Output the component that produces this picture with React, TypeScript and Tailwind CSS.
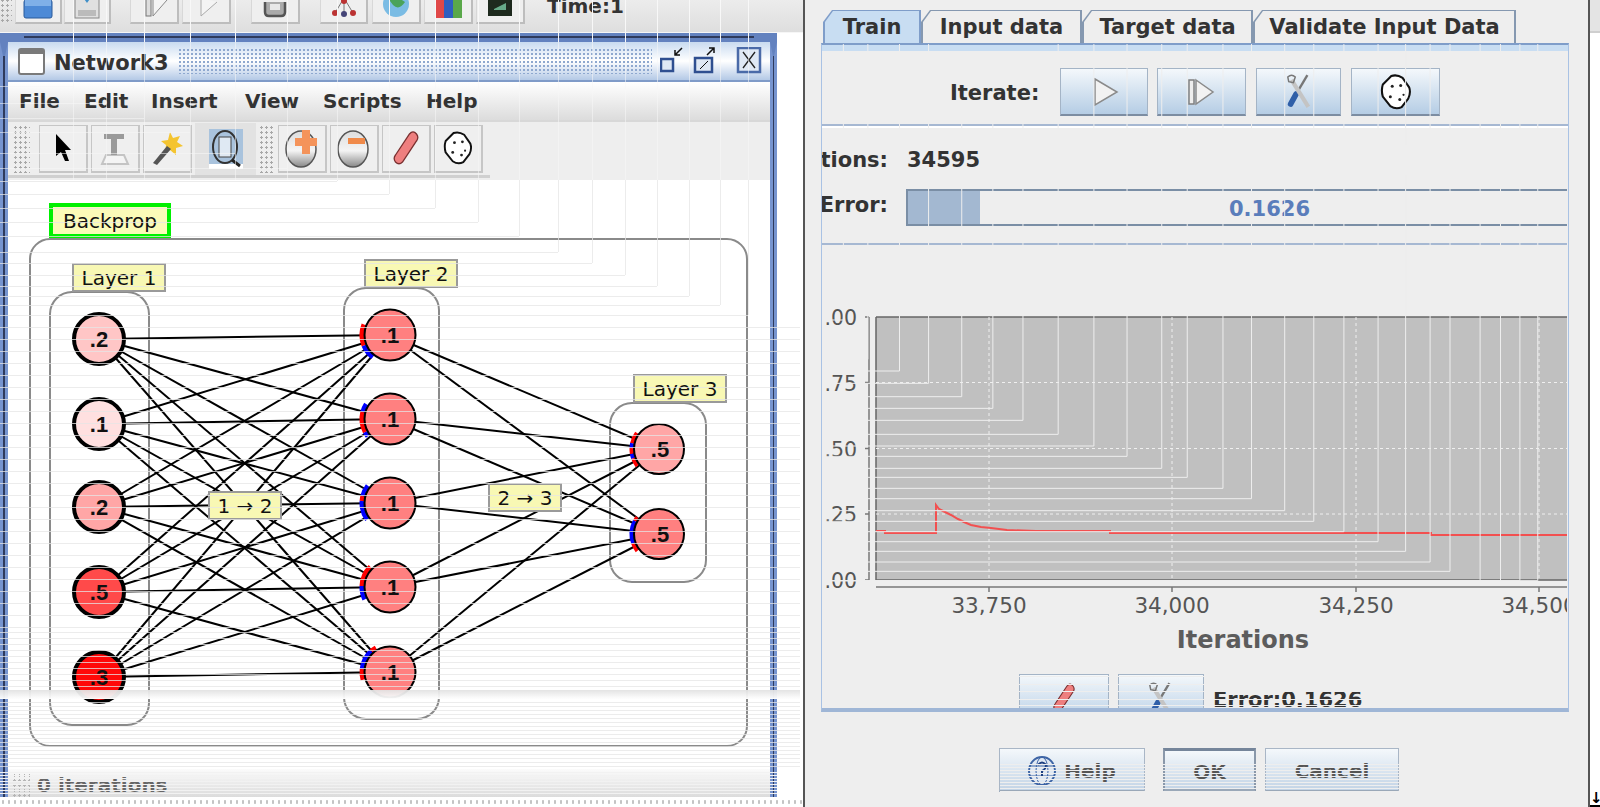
import React from "react";

const L1 = [339, 424, 507, 592, 677].map((y) => ({ x: 99, y }));
const L2 = [335, 419, 503, 587, 672].map((y) => ({ x: 390, y }));
const L3 = [449, 534].map((y) => ({ x: 659, y }));
const L1Fill = ["#ffc6c6", "#ffe0e0", "#ffa6a6", "#ff4a4a", "#ff0808"];
const L1Text = [".2", ".1", ".2", ".5", ".3"];
const L3Fill = ["#ffa6a6", "#ff8080"];

type Seg = [string, number, number];
const L2Arcs: Seg[][] = [
  [["#f00", -22, 22], ["#00f", 22, 52]],
  [["#00f", -32, -14], ["#f00", -14, 28], ["#00f", 28, 38]],
  [["#00f", -38, -14], ["#f00", -14, -4], ["#00f", -4, 36]],
  [["#f00", -46, -2], ["#00f", -2, 26]],
  [["#f00", -60, -48], ["#00f", -48, -6], ["#f00", -6, 16]],
];
const L3Arcs: Seg[][] = [
  [["#f00", -36, -12], ["#00f", -12, -2], ["#f00", -2, 10], ["#00f", 10, 20], ["#f00", 20, 38]],
  [["#f00", -38, -28], ["#00f", -28, 20], ["#f00", 20, 38]],
];

function arc(cx: number, cy: number, r: number, a: number, b: number) {
  const p = (d: number) => {
    const t = (d * Math.PI) / 180;
    return `${(cx - r * Math.cos(t)).toFixed(1)} ${(cy + r * Math.sin(t)).toFixed(1)}`;
  };
  return `M${p(a)} A${r} ${r} 0 0 0 ${p(b)}`;
}

function Label({ x, y, w, h, text, green }: { x: number; y: number; w: number; h: number; text: string; green?: boolean }) {
  return (
    <g>
      {green ? (
        <rect x={x + 2} y={y + 2} width={w - 4} height={h - 4} fill="#fbfbb8" stroke="#00f000" strokeWidth="4" />
      ) : (
        <rect x={x + 1} y={y + 1} width={w - 2} height={h - 2} fill="#f8f8b4" stroke="#9a9a9a" strokeWidth="2" />
      )}
      <text x={x + w / 2} y={y + h / 2 + 7} textAnchor="middle" fontSize="20" fill="#111" fontFamily="DejaVu Sans">
        {text}
      </text>
    </g>
  );
}

function Diagram() {
  return (
    <svg className="block w-[762px] h-[589px] shrink-0" viewBox="8 180 762 589">
      <rect x="8" y="180" width="762" height="589" fill="#fff" />
      <g fill="none" stroke="#8a8a8a" strokeWidth="2">
        <rect x="30" y="239" width="717" height="507" rx="20" />
        <rect x="50" y="292" width="99" height="433" rx="22" />
        <rect x="344" y="288" width="95" height="431" rx="22" />
        <rect x="610" y="403" width="96" height="179" rx="22" />
      </g>
      <g stroke="#000" strokeWidth="2">
        {L1.flatMap((a, i) => L2.map((b, j) => <line key={`a${i}${j}`} x1={a.x} y1={a.y} x2={b.x} y2={b.y} />))}
        {L2.flatMap((a, i) => L3.map((b, j) => <line key={`b${i}${j}`} x1={a.x} y1={a.y} x2={b.x} y2={b.y} />))}
      </g>
      {L2.map((n, i) =>
        L2Arcs[i].map((s, k) => <path key={`${i}-${k}`} d={arc(n.x, n.y, 28, s[1], s[2])} fill="none" stroke={s[0]} strokeWidth="5" />)
      )}
      {L3.map((n, i) =>
        L3Arcs[i].map((s, k) => <path key={`${i}-${k}`} d={arc(n.x, n.y, 27, s[1], s[2])} fill="none" stroke={s[0]} strokeWidth="5" />)
      )}
      {L1.map((n, i) => (
        <g key={i}>
          <circle cx={n.x} cy={n.y} r="25" fill={L1Fill[i]} stroke="#000" strokeWidth="4" />
          <text x={n.x} y={n.y + 8} textAnchor="middle" fontSize="22" fontWeight="700" fontFamily="Liberation Sans" fill="#111">
            {L1Text[i]}
          </text>
        </g>
      ))}
      {L2.map((n, i) => (
        <g key={i}>
          <circle cx={n.x} cy={n.y} r="25.5" fill="#ff8080" stroke="#000" strokeWidth="2" />
          <text x={n.x} y={n.y + 8} textAnchor="middle" fontSize="22" fontWeight="700" fontFamily="Liberation Sans" fill="#111">
            .1
          </text>
        </g>
      ))}
      {L3.map((n, i) => (
        <g key={i}>
          <circle cx={n.x} cy={n.y} r="25" fill={L3Fill[i]} stroke="#000" strokeWidth="2" />
          <text x={n.x + 1} y={n.y + 8} textAnchor="middle" fontSize="22" fontWeight="700" fontFamily="Liberation Sans" fill="#111">
            .5
          </text>
        </g>
      ))}
      <Label x={49} y={203} w={122} h={35} text="Backprop" green />
      <Label x={72} y={263} w={94} h={29} text="Layer 1" />
      <Label x={364} y={259} w={94} h={29} text="Layer 2" />
      <Label x={633} y={374} w={94} h={29} text="Layer 3" />
      <Label x={208} y={491} w={74} h={29} text="1 → 2" />
      <Label x={488} y={483} w={74} h={29} text="2 → 3" />
    </svg>
  );
}

/* ---------- icons ---------- */
function Cursor() {
  return (
    <svg width="20" height="30" viewBox="0 0 20 30">
      <path d="M3 1 L18 17 L12 17 L16 28 L12 28 L8 19 L3 23 Z" fill="#000" />
    </svg>
  );
}
function TextTool() {
  return (
    <svg width="34" height="34" viewBox="0 0 34 34">
      <path d="M8 24 L26 24 L30 33 L4 33 Z" fill="#f4f4f4" stroke="#c4c4c4" strokeWidth="2" />
      <path d="M6 3 H26 V8 H19 V24 H13 V8 H6 Z" fill="#9a9a9a" />
    </svg>
  );
}
function Wand() {
  return (
    <svg width="34" height="36" viewBox="0 0 34 36">
      <path d="M20 2 L23 8 L30 6 L27 12 L33 16 L26 18 L26 25 L20 20 L15 23 L16 15 L11 11 L18 10 Z" fill="#f4c430" />
      <path d="M3 33 L17 16 L21 19 L7 35 Z" fill="#555" />
    </svg>
  );
}
function ZoomIcon() {
  return (
    <svg width="36" height="42" viewBox="0 0 36 42">
      <rect x="1" y="1" width="34" height="40" fill="#a9c3dd" />
      <rect x="1" y="36" width="34" height="5" fill="#fff" />
      <ellipse cx="17" cy="19" rx="12" ry="16" fill="none" stroke="#333" strokeWidth="2" />
      <rect x="11" y="9" width="12" height="20" fill="#dfe9f3" stroke="#444" />
      <path d="M24 32 L32 38" stroke="#222" strokeWidth="3" />
    </svg>
  );
}
function NodeIcon({ minus }: { minus?: boolean }) {
  const id = minus ? "gm" : "gp";
  return (
    <svg width="34" height="40" viewBox="0 0 34 40">
      <defs>
        <linearGradient id={id} x1="0" y1="0" x2="0" y2="1">
          <stop offset="0" stopColor="#ddd" />
          <stop offset="0.55" stopColor="#f4f4f4" />
          <stop offset="1" stopColor="#888" />
        </linearGradient>
      </defs>
      <ellipse cx="16" cy="21" rx="15" ry="18" fill={`url(#${id})`} stroke="#555" strokeWidth="1.5" />
      {minus ? (
        <rect x="11" y="10" width="17" height="6" fill="#f08a4a" />
      ) : (
        <path d="M17 2 H25 V10 H32 V18 H25 V26 H17 V18 H10 V10 H17 Z" fill="#f4935a" />
      )}
    </svg>
  );
}
function Eraser() {
  return (
    <svg width="28" height="40" viewBox="0 0 32 40">
      <path d="M4 28 L20 4 Q24 -1 28 4 Q31 8 28 12 L12 36 Q8 40 4 36 Q1 32 4 28 Z" fill="#ee7f7f" stroke="#7a3030" strokeWidth="1.5" />
    </svg>
  );
}
function Dice({ w = 30 }: { w?: number }) {
  return (
    <svg width={w} height="38" viewBox="0 0 34 38">
      <path d="M12 2 Q18 0 24 4 L31 14 Q33 20 30 26 L23 35 Q17 38 11 34 L3 24 Q1 17 3 11 Z" fill="#fff" stroke="#111" strokeWidth="2.2" strokeLinejoin="round" />
      <g fill="#222">
        <circle cx="13" cy="13" r="1.6" />
        <circle cx="22" cy="12" r="1.6" />
        <circle cx="11" cy="24" r="1.6" />
        <circle cx="21" cy="27" r="1.6" />
        <circle cx="25" cy="22" r="1.2" />
      </g>
    </svg>
  );
}
function Play({ bar }: { bar?: boolean }) {
  return (
    <svg width="34" height="30" viewBox="0 0 34 30">
      {bar && <rect x="4" y="3" width="5" height="24" fill="#eee" stroke="#808080" strokeWidth="1.5" />}
      <path d={bar ? "M11 3 L28 15 L11 27 Z" : "M8 2 L30 15 L8 28 Z"} fill="#f2f2f2" stroke="#8a8a8a" strokeWidth="1.5" />
    </svg>
  );
}
function Tools() {
  return (
    <svg width="28" height="38" viewBox="0 0 30 40">
      <path d="M24 2 L12 22" stroke="#777" strokeWidth="2.5" />
      <path d="M12 22 L6 33" stroke="#2f5fa8" strokeWidth="6" strokeLinecap="round" />
      <path d="M7 7 L25 36" stroke="#c4c4c4" strokeWidth="4.5" />
      <path d="M3 4 Q7 0 11 4 L9 10 L4 9 Z" fill="none" stroke="#777" strokeWidth="1.6" />
    </svg>
  );
}
function HelpIcon() {
  return (
    <svg width="28" height="30" viewBox="0 0 28 30">
      <ellipse cx="14" cy="15" rx="13" ry="14" fill="#dfe8f3" stroke="#3d64a5" strokeWidth="2" />
      <ellipse cx="14" cy="15" rx="6" ry="14" fill="none" stroke="#3d64a5" />
      <path d="M2 10 H26 M2 20 H26" stroke="#3d64a5" />
      <path d="M10 9 Q14 4 18 9 Q18 13 14 15 V20" fill="none" stroke="#1d3f80" strokeWidth="2" />
    </svg>
  );
}

function TopBtn({ children, w = "w-[48px]" }: { children?: React.ReactNode; w?: string }) {
  return (
    <div className={`${w} h-[46px] shrink-0 bg-[#efefef] border-r-2 border-b-2 border-l border-[#bdbdbd] border-l-[#d8d8d8] flex items-end justify-center pb-[2px] overflow-hidden`}>
      {children}
    </div>
  );
}
function ToolBtn({ children }: { children?: React.ReactNode }) {
  return (
    <div className="w-[49px] h-[48px] shrink-0 bg-[#efefef] border border-[#c6c6c6] border-b-2 border-r-2 flex items-center justify-center">
      {children}
    </div>
  );
}
function Grip({ w }: { w: string }) {
  return <div className={`${w} h-[48px] shrink-0 bg-[radial-gradient(#a8a8a8_1px,transparent_1.2px)] bg-[length:5px_5px]`} />;
}
function IterBtn({ children, w }: { children: React.ReactNode; w: string }) {
  return (
    <div className={`${w} h-[48px] shrink-0 bg-linear-to-b from-[#f4f8fb] to-[#b5cde5] border border-[#a4b4c6] border-b-2 border-b-[#7c8da2] flex items-center justify-center`}>
      {children}
    </div>
  );
}
function Tab({ w, label, active }: { w: string; label: string; active?: boolean }) {
  return (
    <div
      className={`${w} h-[33px] shrink-0 [clip-path:polygon(9px_0,100%_0,100%_100%,0_100%,0_12px)] flex items-center justify-center font-bold text-[21px] text-[#333] ${
        active ? "bg-[#7f9dc9]" : "bg-[#8598b0]"
      }`}
    >
      <div
        className={`w-full h-full mt-[2px] ml-[2px] mr-[2px] pt-[1px] [clip-path:polygon(8px_0,100%_0,100%_100%,0_100%,0_11px)] flex items-center justify-center whitespace-nowrap ${
          active ? "bg-[#c8ddf2]" : "bg-[#eeeeee]"
        }`}
      >
        {label}
      </div>
    </div>
  );
}
function DlgBtn({ w, children, strong }: { w: string; children: React.ReactNode; strong?: boolean }) {
  return (
    <div
      className={`${w} h-[44px] shrink-0 pt-[3px] bg-linear-to-b from-[#f4f8fb] to-[#c3d4e6] border border-[#a9b6c6] flex items-center justify-center gap-[8px] font-bold text-[20px] text-[#555] border-b-2 border-b-[#9aa8b8] ${
        strong ? "border-t-[3px] border-t-[#75859a] border-x-2 border-x-[#8a98aa] border-b-[3px] border-b-[#8a98aa]" : ""
      }`}
    >
      {children}
    </div>
  );
}

/* ---------- chart ---------- */
const chartStairs: [number, number][] = [
  [85, 60], [133, 178], [195, 213], [252, 250], [317, 290], [378, 325], [437, 361], [506, 403], [576, 438], [641, 469],
  [709, 505], [759, 532], [829, 565], [885, 596], [950, 632], [1007, 664], [1066, 695], [1133, 725], [1187, 754],
  [1235, 786], [1274, 814], [1333, 842], [1373, 842], [1411, 842], [1446, 842],
];
const stairs = chartStairs.map(([X, Y]) => [800 + X / 1.96, 300 + Y / 3]);

function Chart() {
  const xs = [988, 1171, 1355, 1538];
  const ys = [382.5, 448.5, 514];
  const tickY = [317, 382.5, 448.5, 514, 580];
  const yl = ["1.00", "0.75", "0.50", "0.25", "0.00"];
  const xl = ["33,750", "34,000", "34,250", "34,500"];
  const red =
    "M875 531 H884 V533 H935 V505 L938 509 L944 512 L950 515 L957 519 L963 522 L970 525 L980 527 L990 528 L1006 530 L1035 531 H1109 V533 H1430 V535 H1566";
  return (
    <svg className="block ml-[3px] w-[742px] h-[420px] shrink-0" viewBox="824 245 742 420">
      <rect x="875" y="317" width="691" height="263" fill="#c0c0c0" />
      <path d="M875 317 H1566" stroke="#666" strokeWidth="1.5" />
      <path d="M875 317 V580 H1566" fill="none" stroke="#666" strokeWidth="1.5" />
      <g stroke="#efefef" strokeDasharray="3 3">
        {xs.map((x) => (
          <line key={x} x1={x} y1="317" x2={x} y2="580" />
        ))}
        {ys.map((y) => (
          <line key={y} x1="875" y1={y} x2="1566" y2={y} />
        ))}
      </g>
      <path d="M868 317 V580" stroke="#777" strokeWidth="1.5" />
      {tickY.map((y, i) => (
        <g key={y}>
          <line x1="864" y1={y} x2="868" y2={y} stroke="#777" strokeWidth="1.5" />
          <text x="856" y={y + 8} textAnchor="end" fontSize="20.5" fill="#555" fontFamily="DejaVu Sans">
            {yl[i]}
          </text>
        </g>
      ))}
      <path d="M875 587 H1566" stroke="#777" strokeWidth="1.5" />
      {xs.map((x, i) => (
        <g key={x}>
          <line x1={x} y1="587" x2={x} y2="592" stroke="#777" strokeWidth="1.5" />
          <text x={x} y="613" textAnchor="middle" fontSize="21.5" fill="#555" fontFamily="DejaVu Sans">
            {xl[i]}
          </text>
        </g>
      ))}
      <path d={red} fill="none" stroke="#f25050" strokeWidth="2" />
      <text x="1242" y="648" textAnchor="middle" fontSize="24" fontWeight="700" fill="#5c5c5c" fontFamily="DejaVu Sans">
        Iterations
      </text>
    </svg>
  );
}

/* ---------- screen artefacts ---------- */
function LeftTrails() {
  const X = [73, 106, 144, 190, 235, 287, 337, 389, 435, 478, 519, 558, 592, 625, 657, 689, 720, 748];
  const Y = [86, 103, 118, 132, 153, 168, 181, 194, 208, 222, 236, 252, 263, 275, 286, 296, 305, 315];
  const rows: number[] = [];
  for (let y = 327; y < 630; y += 12) rows.push(y);
  for (let y = 632; y < 690; y += 6) rows.push(y);
  for (let y = 698; y < 769; y += 4) rows.push(y);
  const status: number[] = [];
  for (let y = 772; y < 796; y += 3) status.push(y);
  return (
    <svg className="absolute left-0 top-0 w-[803px] h-[807px] pointer-events-none" viewBox="0 0 803 807">
      {X.map((x, i) => (
        <g key={x}>
          <line x1={x + 0.5} y1="0" x2={x + 0.5} y2="42" stroke="#f8f8f8" />
          <line x1={x + 0.5} y1="42" x2={x + 0.5} y2="180" stroke="#f8f8f8" opacity="0.55" />
          {Y[i] > 180 && <line x1={x + 0.5} y1="180" x2={x + 0.5} y2={Y[i]} stroke="#e6e6e6" opacity="0.75" />}
          <line x1="0" y1={Y[i] + 0.5} x2={x} y2={Y[i] + 0.5} stroke={Y[i] < 180 ? "#f8f8f8" : "#e6e6e6"} opacity={Y[i] < 180 ? 0.55 : 0.75} />
        </g>
      ))}
      {rows.map((y) => (
        <line key={y} x1="0" y1={y + 0.5} x2="800" y2={y + 0.5} stroke="#e6e6e6" opacity="0.75" />
      ))}
      {status.map((y) => (
        <line key={y} x1="0" y1={y + 0.5} x2="777" y2={y + 0.5} stroke="#f2f2f2" />
      ))}
      <defs>
        <linearGradient id="band" x1="0" y1="0" x2="0" y2="1">
          <stop offset="0" stopColor="#e2e2e2" />
          <stop offset="1" stopColor="#ffffff" />
        </linearGradient>
      </defs>
      <rect x="0" y="690" width="800" height="9" fill="url(#band)" opacity="0.95" />
    </svg>
  );
}
function RightTrails() {
  const stripes: number[] = [];
  for (let y = 764; y < 792; y += 3) stripes.push(y);
  return (
    <svg className="absolute left-[803px] top-0 w-[797px] h-[807px] pointer-events-none" viewBox="803 0 797 807">
      {stairs.map(([x, y]) => {
        const label = x < 900;
        const iterate = x > 945 && x < 1045;
        return (
          <g key={x} stroke="#eeeeee">
            {!iterate && <line x1={x} y1="44" x2={x} y2="145" />}
            {iterate && <line x1={x} y1="118" x2={x} y2="145" />}
            <line x1={x} y1={label ? 226 : 175} x2={x} y2={y} />
            <line x1="822" y1={y} x2={x} y2={y} />
          </g>
        );
      })}
      {[676, 684, 691, 699, 705].map((y) => (
        <line key={y} x1="1000" y1={y + 0.5} x2="1400" y2={y + 0.5} stroke="#eeeeee" />
      ))}
      {stripes.map((y) => (
        <line key={y} x1="1000" y1={y + 0.5} x2="1400" y2={y + 0.5} stroke="#eeeeee" />
      ))}
    </svg>
  );
}

function SideBorder({ w }: { w: string }) {
  return <div className={`${w} shrink-0 bg-[#2e3a5c] border-x-[3px] border-[#7694cf] border-t-[14px] border-t-[#6382bf]`} />;
}

export default function App() {
  return (
    <div className="relative w-[1600px] h-[807px] overflow-hidden flex bg-white font-['DejaVu_Sans',sans-serif]">
      {/* left column */}
      <div className="w-[803px] shrink-0 flex flex-col">
        <div className="h-[33px] shrink-0 bg-linear-to-b from-[#ececec] to-[#dedede] border-b border-[#f6f6f6] flex items-end overflow-hidden pb-[8px]">
          <div className="w-[12px] h-[46px] shrink-0 bg-[radial-gradient(#a8a8a8_1px,transparent_1.2px)] bg-[length:5px_5px]" />
          <div className="w-[3px]" />
          <TopBtn w="w-[47px]">
            <svg width="30" height="20" viewBox="0 0 30 20">
              <rect x="1" y="0" width="28" height="18" rx="2" fill="#4d8ad6" stroke="#2a5a9a" />
              <rect x="2" y="0" width="26" height="6" fill="#7fb0e8" />
            </svg>
          </TopBtn>
          <div className="w-[2px]" />
          <TopBtn w="w-[47px]">
            <svg width="28" height="24" viewBox="0 0 28 24">
              <rect x="2" y="0" width="24" height="22" fill="#e0e0e0" stroke="#888" />
              <path d="M9 0 L14 7 L19 0 Z" fill="#3f8fc8" />
              <rect x="5" y="14" width="18" height="6" fill="#bbb" />
            </svg>
          </TopBtn>
          <div className="w-[19px]" />
          <TopBtn w="w-[49px]">
            <svg width="30" height="22" viewBox="0 0 30 22">
              <rect x="7" y="0" width="5" height="18" fill="#ddd" stroke="#777" />
              <path d="M14 2 V18 L28 2" fill="#f4f4f4" stroke="#888" />
            </svg>
          </TopBtn>
          <div className="w-[3px]" />
          <TopBtn w="w-[49px]">
            <svg width="30" height="22" viewBox="0 0 30 22">
              <path d="M10 0 V18 L26 4" fill="#f4f4f4" stroke="#aaa" />
            </svg>
          </TopBtn>
          <div className="w-[20px]" />
          <TopBtn w="w-[49px]">
            <svg width="28" height="18" viewBox="0 0 28 18">
              <path d="M4 0 V10 Q4 14 8 14 H20 Q24 14 24 10 V0" fill="#aaa" stroke="#555" strokeWidth="2.5" />
              <rect x="9" y="2" width="10" height="6" fill="#e8e8e8" />
            </svg>
          </TopBtn>
          <div className="w-[20px]" />
          <TopBtn w="w-[48px]">
            <svg width="28" height="22" viewBox="0 0 28 22">
              <path d="M14 0 L5 15 M14 0 L14 15 M14 0 L23 15" stroke="#777" />
              <circle cx="14" cy="3" r="3" fill="#b33" />
              <circle cx="5" cy="15" r="3" fill="#b33" />
              <circle cx="14" cy="16" r="3" fill="#447" />
              <circle cx="23" cy="15" r="3" fill="#b33" />
            </svg>
          </TopBtn>
          <div className="w-[4px]" />
          <TopBtn w="w-[49px]">
            <svg width="30" height="24" viewBox="0 0 30 24">
              <circle cx="15" cy="8" r="13" fill="#7bbce4" />
              <path d="M6 1 Q16 0 24 6 Q18 15 12 9 Z" fill="#4aa35a" />
            </svg>
          </TopBtn>
          <div className="w-[3px]" />
          <TopBtn w="w-[49px]">
            <svg width="32" height="24" viewBox="0 0 32 24">
              <rect x="3" y="0" width="9" height="22" fill="#e04848" />
              <rect x="12" y="3" width="9" height="19" fill="#2f5fc0" />
              <rect x="21" y="0" width="9" height="22" fill="#5aa84a" />
            </svg>
          </TopBtn>
          <div className="w-[3px]" />
          <TopBtn w="w-[49px]">
            <svg width="30" height="24" viewBox="0 0 30 24">
              <rect x="3" y="0" width="24" height="20" fill="#1e2a1e" />
              <path d="M9 13 L21 7 V14 H9 Z" fill="#6a8" />
            </svg>
          </TopBtn>
          <div className="ml-[22px] font-bold text-[20px] text-[#333] leading-[24px] translate-y-[-6px]">Time:1</div>
        </div>
        {/* internal frame */}
        <div className="w-[777px] h-[764px] shrink-0 bg-white flex flex-col overflow-hidden">
          <div className="h-[9px] shrink-0 bg-[#6382bf] pt-[3px] pl-[24px]">
            <div className="w-[730px] h-[2px] bg-[#2e3a5c]" />
          </div>
          <div className="flex flex-1 min-h-0">
            <SideBorder w="w-[8px]" />
            <div className="w-[762px] shrink-0 flex flex-col">
              <div className="h-[40px] shrink-0 bg-linear-to-b from-[#c9dbf0] via-white to-[#b4c9e6] border-b-2 border-[#7f9bc8] flex items-center pl-[10px]">
                <div className="w-[27px] h-[27px] shrink-0 rounded-[3px] border-[2px] border-[#7a7a7a] border-t-[6px] bg-white" />
                <div className="ml-[9px] w-[115px] shrink-0 pt-[4px] font-bold text-[21px] text-[#333] leading-none">Network3</div>
                <div className="ml-[9px] w-[474px] h-[26px] shrink-0 bg-[radial-gradient(#8ea8cf_1px,transparent_1.2px)] bg-[length:4px_4px]" />
                <svg className="ml-[8px] shrink-0" width="102" height="28" viewBox="0 0 102 28">
                  <rect x="1" y="12" width="12" height="12" fill="#dfe8f4" stroke="#2f4f90" strokeWidth="2.5" />
                  <path d="M22 1 L15 8 M15 3 V8 H20" fill="none" stroke="#111" strokeWidth="1.5" />
                  <rect x="35" y="11" width="17" height="14" fill="#dfe8f4" stroke="#2f4f90" strokeWidth="2.5" />
                  <path d="M40 22 L48 14" stroke="#111" />
                  <path d="M47 8 L54 1 M49 1 H54 V6" fill="none" stroke="#111" strokeWidth="1.5" />
                  <rect x="78" y="1" width="22" height="24" fill="#dfe8f4" stroke="#4a6aa8" strokeWidth="2.5" />
                  <path d="M83 5 L95 21 M95 5 L83 21" stroke="#222" strokeWidth="1.3" />
                </svg>
              </div>
              <div className="h-[38px] shrink-0 bg-linear-to-b from-white to-[#dcdcdc] flex items-center pl-[11px] font-bold text-[20px] text-[#333] leading-none">
                <span className="w-[65px]">File</span>
                <span className="w-[67px]">Edit</span>
                <span className="w-[94px]">Insert</span>
                <span className="w-[78px]">View</span>
                <span className="w-[103px]">Scripts</span>
                <span>Help</span>
              </div>
              <div className="h-[60px] shrink-0 bg-[#eeeeee] flex flex-col border-t-2 border-[#d8d8d8]">
                <div className="w-[482px] h-[56px] flex items-center pl-[5px] gap-[3px] border-b-[3px] border-[#d0d0d0]">
                  <Grip w="w-[17px]" />
                  <div className="w-[3px]" />
                  <ToolBtn><Cursor /></ToolBtn>
                  <ToolBtn><TextTool /></ToolBtn>
                  <ToolBtn><Wand /></ToolBtn>
                  <div className="w-[61px] h-[52px] shrink-0 bg-[#e2e2e2] flex items-center justify-center"><ZoomIcon /></div>
                  <Grip w="w-[16px]" />
                  <ToolBtn><NodeIcon /></ToolBtn>
                  <ToolBtn><NodeIcon minus /></ToolBtn>
                  <ToolBtn><Eraser /></ToolBtn>
                  <ToolBtn><Dice /></ToolBtn>
                </div>
              </div>
              <Diagram />
              <div className="h-[28px] shrink-0 pt-[3px] bg-linear-to-b from-[#fbfbfb] to-[#dcdcdc] flex items-center font-bold text-[20px] text-[#666] leading-none">
                <div className="ml-[4px] w-[18px] h-[24px] bg-[radial-gradient(#b4b4b4_1px,transparent_1.2px)] bg-[length:5px_5px]" />
                <span className="ml-[7px]">0 iterations</span>
              </div>
            </div>
            <SideBorder w="w-[7px]" />
          </div>
        </div>
        <div className="flex-1 bg-[radial-gradient(#c4c4c4_1px,transparent_1.2px)] bg-[length:6px_10px]" />
      </div>

      {/* dialog */}
      <div className="w-[787px] h-[807px] shrink-0 bg-[#eeeeee] border-x-2 border-[#555] flex flex-col pt-[10px] pl-[16px]">
        <div className="flex h-[33px] shrink-0 pl-[2px]">
          <Tab w="w-[98px]" label="Train" active />
          <Tab w="w-[161px]" label="Input data" />
          <Tab w="w-[171px]" label="Target data" />
          <Tab w="w-[263px]" label="Validate Input Data" />
        </div>
        <div className="w-[748px] h-[669px] shrink-0 border-x border-b-[4px] border-x-[#a9c2e4] border-b-[#9fb6d6] border-t-2 border-t-[#7f9dc9] flex flex-col overflow-hidden">
          <div className="h-[6px] shrink-0 bg-[#c8ddf2]" />
          <div className="h-[75px] shrink-0 flex items-start pt-[17px] pl-[128px] border-b-2 border-[#a6b8d2] shadow-[0_2px_0_#fff]">
            <div className="w-[110px] h-[48px] shrink-0 pt-[3px] flex items-center font-bold text-[21px] text-[#333]">Iterate:</div>
            <IterBtn w="w-[88px]"><Play /></IterBtn>
            <div className="w-[9px]" />
            <IterBtn w="w-[89px]"><Play bar /></IterBtn>
            <div className="w-[10px]" />
            <IterBtn w="w-[85px]"><Tools /></IterBtn>
            <div className="w-[10px]" />
            <IterBtn w="w-[89px]"><Dice w={32} /></IterBtn>
          </div>
          <div className="h-[119px] shrink-0 border-b-2 border-[#a6b8d2] flex flex-col w-[745px] font-bold text-[21px] text-[#333] leading-none">
            <div className="h-[63px] shrink-0 flex items-center pt-[6px]">
              <div className="w-[66px] shrink-0 flex justify-end overflow-hidden whitespace-nowrap">Iterations:</div>
              <div className="ml-[19px]">34595</div>
            </div>
            <div className="flex">
              <div className="w-[66px] shrink-0 flex justify-end overflow-hidden whitespace-nowrap pt-[6px]">Error:</div>
              <div className="ml-[18px] flex-1 h-[37px] relative pt-[3px] border-y-2 border-l-2 border-[#7a8ea5] bg-[#eeeeee] flex items-center justify-center pl-[64px] text-[#5a7dbb]">
                <div className="absolute left-0 top-0 bottom-0 w-[72px] bg-[#a3b8d1]" />
                <span className="relative">0.1626</span>
              </div>
            </div>
          </div>
          <Chart />
          <div className="h-[43px] shrink-0 flex pt-[9px] pl-[197px] overflow-hidden">
            <div className="w-[90px] h-[50px] shrink-0 bg-linear-to-b from-[#f4f8fb] to-[#b5cde5] border border-[#a4b4c6] flex items-start justify-center pt-[8px]">
              <svg width="26" height="30" viewBox="0 0 32 40"><path d="M4 28 L20 4 Q24 -1 28 4 Q31 8 28 12 L12 36 Q8 40 4 36 Q1 32 4 28 Z" fill="#ee7f7f" stroke="#7a3030" strokeWidth="1.5" /></svg>
            </div>
            <div className="w-[9px]" />
            <div className="w-[86px] h-[50px] shrink-0 bg-linear-to-b from-[#f4f8fb] to-[#b5cde5] border border-[#a4b4c6] flex items-start justify-center pt-[6px]">
              <Tools />
            </div>
            <div className="ml-[9px] pt-[14px] font-bold text-[21px] text-[#333] leading-[24px]">Error:0.1626</div>
          </div>
        </div>
        <div className="flex pt-[36px] pl-[178px]">
          <DlgBtn w="w-[146px]"><HelpIcon /><span>Help</span></DlgBtn>
          <div className="w-[18px]" />
          <DlgBtn w="w-[93px]" strong>OK</DlgBtn>
          <div className="w-[9px]" />
          <DlgBtn w="w-[134px]">Cancel</DlgBtn>
        </div>
      </div>

      {/* right sliver */}
      <div className="w-[10px] shrink-0 flex flex-col">
        <div className="h-[33px] shrink-0 bg-[#e4e4e4] border-b-2 border-[#cfcfcf]" />
        <div className="flex-1" />
        <div className="h-[15px] shrink-0 font-bold text-[15px] leading-[13px] text-black border-b-2 border-black text-center">↓</div>
      </div>

      <LeftTrails />
      <RightTrails />
    </div>
  );
}
